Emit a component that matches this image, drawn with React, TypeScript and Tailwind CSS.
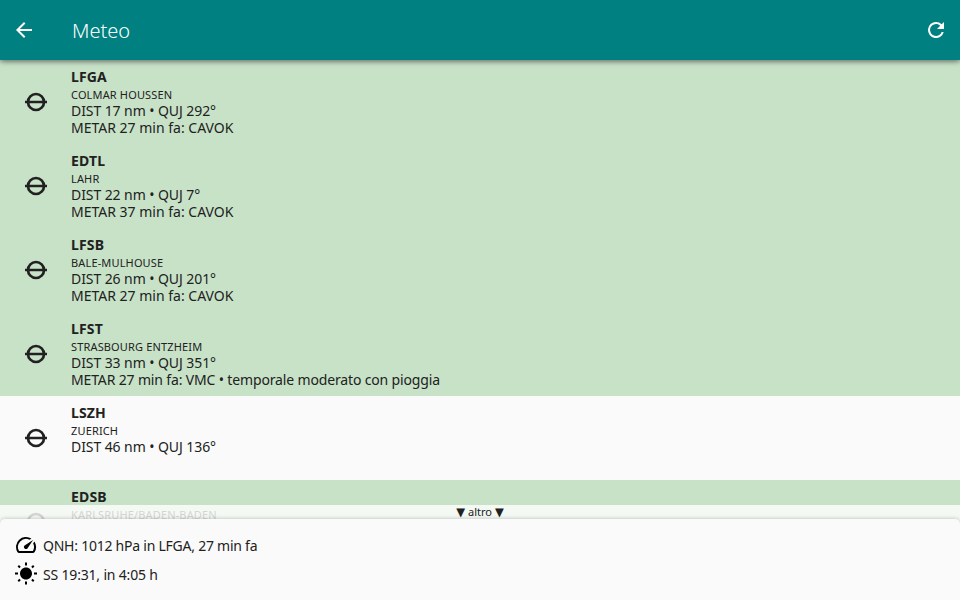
import React from "react";

type Station = {
  code: string;
  name: string;
  dist?: string;
  metar?: string;
  metarClass?: string;
  vmc: boolean;
};

const stations: Station[] = [
  { code: "LFGA", name: "COLMAR HOUSSEN", dist: "DIST 17 nm • QUJ 292°", metar: "METAR 27 min fa: CAVOK", vmc: true },
  { code: "EDTL", name: "LAHR", dist: "DIST 22 nm • QUJ 7°", metar: "METAR 37 min fa: CAVOK", vmc: true },
  { code: "LFSB", name: "BALE-MULHOUSE", dist: "DIST 26 nm • QUJ 201°", metar: "METAR 27 min fa: CAVOK", vmc: true },
  {
    code: "LFST",
    name: "STRASBOURG ENTZHEIM",
    dist: "DIST 33 nm • QUJ 351°",
    metar: "METAR 27 min fa: VMC • temporale moderato con pioggia",
    metarClass: "tracking-[-0.15px]",
    vmc: true,
  },
  { code: "LSZH", name: "ZUERICH", dist: "DIST 46 nm • QUJ 136°", vmc: false },
  { code: "EDSB", name: "KARLSRUHE/BADEN-BADEN", vmc: true },
];

function StationIcon() {
  return (
    <svg viewBox="0 0 24 24" className="size-6 shrink-0" fill="none" stroke="currentColor">
      <circle cx="12" cy="12" r="8" strokeWidth="2.7" />
      <path d="M1 12H23" strokeWidth="2.5" />
    </svg>
  );
}

function StationRow({ s }: { s: Station }) {
  return (
    <li className={`flex h-[84px] shrink-0 items-center gap-[23px] pl-6 ${s.vmc ? "bg-[#c8e2c8]" : "bg-[#fafafa]"}`}>
      <StationIcon />
      <div className="flex h-full flex-col pt-2 whitespace-nowrap">
        <div className="h-[19px] text-[14px] leading-[18px] font-bold tracking-[0.15px]">{s.code}</div>
        <div className="h-[15px] text-[11px] leading-4 tracking-[0.15px]">{s.name}</div>
        <div className="h-[17px] text-[14px] leading-[17px] tracking-[-0.08px]">{s.dist}</div>
        <div className={`h-[17px] text-[14px] leading-[17px] ${s.metarClass ?? ""}`}>{s.metar}</div>
      </div>
    </li>
  );
}

export default function App() {
  return (
    <div className="relative flex h-[600px] w-[960px] flex-col overflow-hidden bg-[#fafafa] font-['Noto_Sans',sans-serif] text-[#212121]">
      <header className="z-10 flex h-15 shrink-0 items-center bg-[#008080] px-3 text-white shadow-[0_1px_6px_rgba(0,0,0,0.6)]">
        <svg viewBox="0 0 24 24" className="size-6" fill="currentColor">
          <path d="M20 11H7.83l5.59-5.59L12 4l-8 8 8 8 1.41-1.41L7.83 13H20v-2z" />
        </svg>
        <h1 className="ml-9 flex-1 pt-0.5 text-[20px] font-light">Meteo</h1>
        <svg viewBox="0 0 24 24" className="size-6" fill="currentColor">
          <path d="M17.65 6.35A7.958 7.958 0 0 0 12 4a8 8 0 1 0 7.73 10h-2.08A6 6 0 1 1 12 6c1.66 0 3.14.69 4.22 1.78L13 11h7V4l-2.35 2.35z" />
        </svg>
      </header>
      <ul className="flex h-[459px] shrink-0 flex-col overflow-hidden">
        {stations.map((s) => (
          <StationRow key={s.code} s={s} />
        ))}
      </ul>
      <div className="absolute top-[505px] left-0 flex h-[14px] w-full items-center justify-center gap-[3px] bg-white/80 text-[11px] leading-[14px]">
        <span className="font-['DejaVu_Sans',sans-serif] text-[11.5px]">▼</span>
        <span>altro</span>
        <span className="font-['DejaVu_Sans',sans-serif] text-[11.5px]">▼</span>
      </div>
      <footer className="z-10 flex flex-1 flex-col gap-[5px] rounded-t-[5px] bg-[#fafafa] pt-[14px] pl-[14px] text-[14px] shadow-[0_0_4px_rgba(0,0,0,0.25)]">
        <div className="flex h-6 items-center gap-[5px]">
          <svg viewBox="0 0 24 24" className="size-6" fill="#000">
            <path d="m20.38 8.57-1.23 1.85a8 8 0 0 1-.22 7.58H5.07A8 8 0 0 1 15.58 6.85l1.85-1.23A10 10 0 0 0 3.35 19a2 2 0 0 0 1.72 1h13.85a2 2 0 0 0 1.74-1 10 10 0 0 0-.27-10.44zm-9.79 6.84a2 2 0 0 0 2.83 0l5.66-8.49-8.49 5.66a2 2 0 0 0 0 2.83z" />
          </svg>
          <span className="tracking-[-0.24px]">QNH: 1012 hPa in LFGA, 27 min fa</span>
        </div>
        <div className="flex h-6 items-center gap-[5px]">
          <svg viewBox="0 0 24 24" className="size-6" fill="#000">
            <path d="m6.76 4.84-1.8-1.79-1.41 1.41 1.79 1.79 1.42-1.41zM4 10.5H1v2h3v-2zm9-9.95h-2V3.5h2V.55zm7.45 3.91-1.41-1.41-1.79 1.79 1.41 1.41 1.79-1.79zm-3.21 13.7 1.79 1.8 1.41-1.41-1.8-1.79-1.4 1.4zM20 10.5v2h3v-2h-3zm-8-5c-3.31 0-6 2.69-6 6s2.69 6 6 6 6-2.69 6-6-2.69-6-6-6zm-1 16.950h2V19.5h-2v2.950zm-7.450-3.910 1.410 1.410 1.790-1.800-1.410-1.410-1.790 1.800z" />
          </svg>
          <span className="tracking-[-0.18px]">SS 19:31, in 4:05 h</span>
        </div>
      </footer>
    </div>
  );
}
